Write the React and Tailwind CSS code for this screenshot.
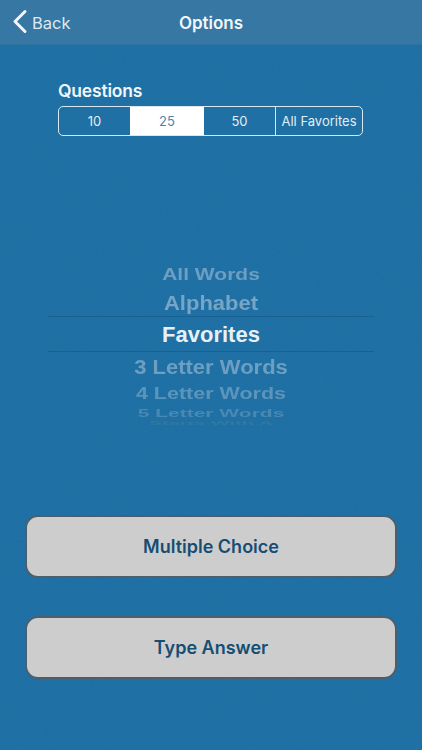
const counts = [
    { label: '10', width: 'w-[71px]' },
    { label: '25', width: 'w-[74px]', active: true },
    { label: '50', width: 'w-[72px]' },
    { label: 'All Favorites', width: 'flex-1' },
];

export default function App() {
    return (
        <div className="relative w-[422px] h-[750px] overflow-hidden flex flex-col bg-[#1b6ea4] font-['Inter','Liberation_Sans',sans-serif] text-white">
            {/* Paper grain on the background */}
            <svg className="absolute inset-0 w-full h-full opacity-[0.05] pointer-events-none" aria-hidden="true">
                <filter id="grain">
                    <feTurbulence type="fractalNoise" baseFrequency="0.83" numOctaves="3" seed="11" />
                    <feColorMatrix type="saturate" values="0" />
                </filter>
                <rect width="100%" height="100%" filter="url(#grain)" />
            </svg>

            {/* Header */}
            <header className="relative h-[45px] shrink-0 flex items-center justify-center pt-[3px] bg-[#3677a3] border-b border-[#2f729f]">
                <div className="absolute left-[12px] top-[0px] h-[45px] flex items-center">
                    <svg width="16" height="26" viewBox="0 0 16 26" fill="none" className="-mt-[1px]">
                        <path d="M13 2.5 L3 12.5 L13 22.5" stroke="#f4f7fa" strokeWidth="3" strokeLinecap="round" strokeLinejoin="round" />
                    </svg>
                    <span className="ml-[4px] pt-[2px] text-[16.5px] text-[#dfe9f0]">Back</span>
                </div>
                <span className="text-[17px] font-semibold text-[#f2f6f9]">Options</span>
            </header>

            {/* Questions */}
            <section className="relative pl-[58px] pt-[35px]">
                <div className="text-[17.5px] leading-[22px] font-semibold text-[#f2f6f9] tracking-[-0.2px]">Questions</div>
                <div className="mt-[4px] w-[305px] h-[30px] flex rounded-[5px] border border-[#dbe7ef] overflow-hidden">
                    {counts.map((c, i) => (
                        <div
                            key={c.label}
                            className={`${c.width} pt-[1px] flex items-center justify-center text-[13px] ${c.active ? 'bg-white text-[#4f86ab]' : 'text-[#e4edf3]'} ${i === 2 ? 'border-r border-[#dbe7ef]' : ''}`}
                        >
                            {c.label}
                        </div>
                    ))}
                </div>
            </section>

            {/* Picker */}
            <section className="relative mt-[128px] h-[162px] flex flex-col items-center font-['Liberation_Sans',sans-serif] font-bold">
                <div className="h-[22px] leading-[22px] text-[21px] text-[#6c9fc2] scale-y-[0.75]">All Words</div>
                <div className="mt-[3px] h-[27px] leading-[27px] text-[22px] text-[#76a5c6] scale-y-[0.95]">Alphabet</div>
                <div className="w-[326px] h-[36px] pt-[1px] flex items-center justify-center border-y border-[#1a6192] text-[22px] text-[#e6f0f6]">
                    Favorites
                </div>
                <div className="h-[30px] leading-[30px] text-[22px] text-[#6c9fc2] scale-y-[0.95]">3 Letter Words</div>
                <div className="h-[24px] leading-[24px] text-[21.5px] text-[#5c95bb] scale-y-[0.78]">4 Letter Words</div>
                <div className="h-[14px] leading-[14px] text-[21px] text-[#4a88b2] scale-y-[0.52]">5 Letter Words</div>
                <div className="h-[6px] leading-[6px] text-[20px] text-[#33789f] scale-y-[0.25]">Starts With A</div>
            </section>

            {/* Buttons */}
            <section className="relative mt-[89px] px-[25px] flex flex-col gap-[38px]">
                <button className="h-[63px] rounded-[13px] bg-[#cdcdcd] border-2 border-[#4d5e6d] text-[18px] font-semibold text-[#164d73]">
                    Multiple Choice
                </button>
                <button className="h-[63px] rounded-[13px] bg-[#cdcdcd] border-2 border-[#4d5e6d] text-[18px] font-semibold text-[#164d73]">
                    Type Answer
                </button>
            </section>
        </div>
    );
}
